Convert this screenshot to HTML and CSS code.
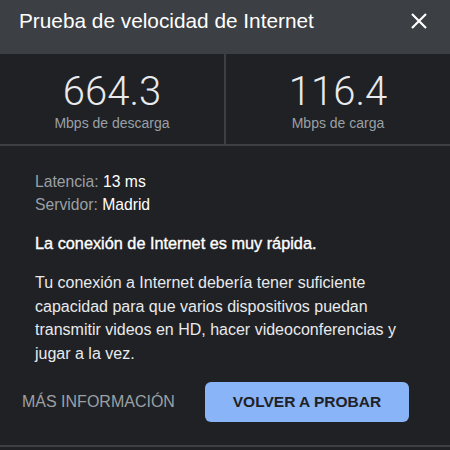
FILE: index.html
```html
<!DOCTYPE html>
<html>
  <head>
    <meta charset="UTF-8">
    <title>Prueba de velocidad de Internet</title>
    <link rel="stylesheet" href="styles.css">
  </head>
  <body>
    <div class="header">
      <h1>Prueba de velocidad de Internet</h1>
      <button class="close" aria-label="Cerrar">
        <svg width="18" height="18" viewBox="0 0 18 18">
          <path d="M2 2 L16 16 M16 2 L2 16" stroke="#fff" stroke-width="2.2" fill="none"/>
        </svg>
      </button>
    </div>

    <div class="stats">
      <div class="stat">
        <div class="value">664.3</div>
        <div class="unit">Mbps de descarga</div>
      </div>
      <div class="stat">
        <div class="value">116.4</div>
        <div class="unit">Mbps de carga</div>
      </div>
    </div>

    <div class="content">
      <p class="meta">
        <span class="key">Latencia:</span> 13 ms<br>
        <span class="key">Servidor:</span> Madrid
      </p>
      <p class="summary">La conexión de Internet es muy rápida.</p>
      <p class="desc">Tu conexión a Internet debería tener suficiente capacidad para que varios dispositivos puedan transmitir videos en HD, hacer videoconferencias y jugar a la vez.</p>
    </div>

    <div class="actions">
      <a href="#" class="more">MÁS INFORMACIÓN</a>
      <button class="retry">VOLVER A PROBAR</button>
    </div>
  </body>
</html>
```

FILE: styles.css
```css
body {
  font-family: "Liberation Sans", Arial, sans-serif;
  margin: 0;
  background-color: #202124;
  color: #fff;
  height: 450px;
  overflow: hidden;
}

.header {
  display: flex;
  align-items: center;
  justify-content: space-between;
  height: 54px;
  padding: 0 22px 12px 19px;
  box-sizing: border-box;
  background-color: #3c3f43;
}
.header h1 {
  margin: 0;
  font-size: 20.8px;
  font-weight: normal;
}
.close {
  background: none;
  border: none;
  padding: 0;
  display: flex;
  cursor: pointer;
}

.stats {
  display: flex;
  height: 90px;
  border-bottom: 2px solid #3c4043;
}
.stat {
  flex: 1;
  text-align: center;
  padding-top: 14px;
}
.stat + .stat {
  border-left: 2px solid #3c4043;
}
.value {
  font-family: Roboto, sans-serif;
  font-weight: 300;
  font-size: 40px;
  line-height: 47px;
  color: #e8eaed;
}
.unit {
  font-size: 14px;
  line-height: 16px;
  color: #9aa0a6;
}

.content {
  padding: 24px 35px 0 35px;
  font-size: 16px;
}
.content p {
  margin: 0;
}
.meta {
  font-size: 15.7px;
  line-height: 23px;
}
.key {
  color: #9aa0a6;
}
.summary {
  margin-top: 16px !important;
  font-size: 16.3px;
  -webkit-text-stroke: 0.35px #fff;
  line-height: 22px;
}
.desc {
  margin-top: 17px !important;
  line-height: 23.5px;
  color: #e8eaed;
}

.actions {
  display: flex;
  align-items: center;
  margin-top: 17px;
  padding: 0 0 23px 22px;
  height: 40px;
  border-bottom: 2px solid #3c4043;
}
.more {
  color: #9aa0a6;
  text-decoration: none;
  font-size: 16px;
  width: 183px;
}
.retry {
  width: 204px;
  height: 40px;
  background-color: #8ab4f8;
  color: #202124;
  border: none;
  border-radius: 6px;
  font-family: "Liberation Sans", Arial, sans-serif;
  font-size: 15.5px;
  font-weight: bold;
  cursor: pointer;
}
```
